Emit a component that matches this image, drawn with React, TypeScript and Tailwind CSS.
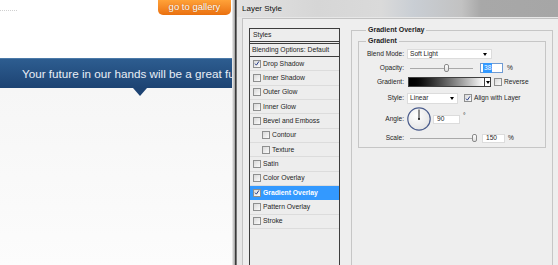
const listItems: { label: string; on?: boolean; sub?: boolean; selected?: boolean }[] = [
  { label: "Drop Shadow", on: true },
  { label: "Inner Shadow" },
  { label: "Outer Glow" },
  { label: "Inner Glow" },
  { label: "Bevel and Emboss" },
  { label: "Contour", sub: true },
  { label: "Texture", sub: true },
  { label: "Satin" },
  { label: "Color Overlay" },
  { label: "Gradient Overlay", on: true, selected: true },
  { label: "Pattern Overlay" },
  { label: "Stroke" },
];

function Check({ on, className = "" }: { on?: boolean; className?: string }) {
  return (
    <span
      className={`inline-flex h-[8px] w-[8px] shrink-0 items-center justify-center border border-[#8e8f8f] bg-gradient-to-br from-[#d9d9d9] to-[#fbfbfb] ${className}`}
    >
      {on && (
        <svg viewBox="0 0 8 8" className="h-[7px] w-[7px]">
          <path d="M1.4 4.2 L3.2 6.2 L6.6 1.2" stroke="#243a86" strokeWidth="1.3" fill="none" />
        </svg>
      )}
    </span>
  );
}

function Arrow() {
  return <span className="h-0 w-0 border-x-[2.5px] border-t-[3px] border-x-transparent border-t-black" />;
}

function Slider({ width, at }: { width: number; at: number }) {
  return (
    <div className="relative h-[10px]" style={{ width }}>
      <div className="absolute left-0 right-0 top-[5px] h-px bg-[#a9a9a9]" />
      <div
        className="absolute top-[1px] h-[8px] w-[5px] rounded-[2px] border border-[#8a8a8a] bg-gradient-to-b from-white to-[#dedede]"
        style={{ left: at - 2.5 }}
      />
    </div>
  );
}

function WebPage() {
  return (
    <div className="relative flex w-[232px] shrink-0 flex-col overflow-hidden bg-white">
      <div className="relative h-[58px] shrink-0">
        <div className="absolute left-0 top-[10px] w-[17px] border-t border-dotted border-[#d0d0d0]" />
        <div className="absolute right-[1px] top-0 flex h-[15px] w-[73px] items-center justify-center rounded-b-[5px] bg-gradient-to-b from-[#ffa238] to-[#ea700c] text-[9.5px] text-white [text-shadow:0_0_1px_#b35500]">
          go to gallery
        </div>
      </div>
      <div className="relative flex h-[30px] shrink-0 items-center whitespace-nowrap border-t border-[#4a79a8] bg-gradient-to-b from-[#2d5d90] to-[#1d4373] pl-[22px] text-[11.7px] text-[#e8eef6]">
        Your future in our hands will be a great future
        <span className="absolute left-[133px] top-[29px] h-0 w-0 border-x-[7.5px] border-t-[8px] border-x-transparent border-t-[#1d4373]" />
      </div>
      <div className="flex-1 bg-gradient-to-b from-[#f6f6f6] to-[#fcfcfc]" />
    </div>
  );
}

function StylesList() {
  return (
    <div className="mt-[9px] flex h-[245px] w-[91px] shrink-0 flex-col border border-[#3d3d3d] bg-[#ededed] text-[6.8px] text-[#1e1e1e]">
      <div className="flex h-[13px] shrink-0 items-center border-b border-[#3d3d3d] pl-[3px]">Styles</div>
      <div className="mt-px flex h-[14px] shrink-0 items-center border-y border-[#3d3d3d] pl-[2px]">Blending Options: Default</div>
      {listItems.map((it) => (
        <div
          key={it.label}
          className={`flex h-[14.35px] shrink-0 items-center border-b ${
            it.selected ? "border-[#3399ff] bg-[#3399ff] font-bold text-white" : "border-[#dcdcdc]"
          } ${it.sub ? "pl-[12px]" : "pl-[3px]"}`}
        >
          <Check on={it.on} />
          <span className="ml-[2px]">{it.label}</span>
        </div>
      ))}
    </div>
  );
}

function Row({ label, h, children }: { label: string; h: string; children: React.ReactNode }) {
  return (
    <div className={`flex items-center ${h}`}>
      <span className="w-[45px] shrink-0 text-right">{label}</span>
      {children}
    </div>
  );
}

function GradientPanel() {
  return (
    <fieldset className="ml-[11px] mt-[7px] h-[245px] w-[202px] shrink-0 border border-[#c6c6c6] px-[6px]">
      <legend className="ml-[8px] px-[2px] text-[7px] font-bold leading-[8px] text-[#1e1e1e]">Gradient Overlay</legend>
      <fieldset className="mt-[3px] border border-[#c6c6c6] pb-[4px] text-[6.6px] text-[#1e1e1e]">
        <legend className="ml-[7px] px-[2px] text-[7px] font-bold leading-[8px]">Gradient</legend>
        <div className="mt-[3px] flex flex-col">
          <Row label="Blend Mode:" h="h-[12px]">
            <div className="ml-[3px] flex h-[10px] w-[85px] items-center justify-between border border-[#dcdcdc] bg-white pl-[2px] pr-[4px]">
              <span>Soft Light</span>
              <Arrow />
            </div>
          </Row>
          <Row label="Opacity:" h="mt-[2px] h-[12px]">
            <div className="ml-[6px]">
              <Slider width={63} at={36} />
            </div>
            <div className="ml-[7px] flex h-[10px] w-[23px] items-center border border-[#6f9bd3] bg-white pl-[2px]">
              <span className="bg-[#3399ff] px-px text-white">38</span>
            </div>
            <span className="ml-[4px]">%</span>
          </Row>
          <Row label="Gradient:" h="mt-[2px] h-[12px]">
            <div className="ml-[4px] flex h-[10px] items-stretch border border-[#3f3f3f]">
              <div className="w-[75px] bg-gradient-to-r from-black to-white" />
              <div className="flex w-[6px] items-center justify-center border-l border-[#3f3f3f] bg-white">
                <Arrow />
              </div>
            </div>
            <Check className="ml-[3px]" />
            <span className="ml-[2px]">Reverse</span>
          </Row>
          <Row label="Style:" h="mt-[4px] h-[12px]">
            <div className="ml-[3px] flex h-[11px] w-[51px] items-center justify-between border border-[#dcdcdc] bg-white pl-[2px] pr-[3px]">
              <span>Linear</span>
              <Arrow />
            </div>
            <Check on className="ml-[6px]" />
            <span className="ml-[2px]">Align with Layer</span>
          </Row>
          <Row label="Angle:" h="mt-[2px] h-[26px]">
            <svg viewBox="0 0 24 24" className="ml-[3px] h-[24px] w-[24px]">
              <defs>
                <radialGradient id="dial" cx="40%" cy="35%" r="70%">
                  <stop offset="0%" stopColor="#ffffff" />
                  <stop offset="100%" stopColor="#e2e2e2" />
                </radialGradient>
              </defs>
              <circle cx="12" cy="12" r="11.2" fill="url(#dial)" stroke="#4a5c8c" strokeWidth="1.2" />
              <line x1="12" y1="12" x2="12" y2="2.5" stroke="#111" strokeWidth="0.9" />
              <circle cx="12" cy="12" r="1" fill="#111" />
            </svg>
            <div className="ml-[2px] flex h-[9px] w-[27px] items-center border border-[#dcdcdc] bg-white pl-[3px]">90</div>
            <span className="mb-[6px] ml-[3px]">°</span>
          </Row>
          <Row label="Scale:" h="mt-px h-[10px]">
            <div className="ml-[6px]">
              <Slider width={65} at={64} />
            </div>
            <div className="ml-[7px] flex h-[9px] w-[23px] items-center border border-[#dcdcdc] bg-white pl-[3px]">150</div>
            <span className="ml-[3px]">%</span>
          </Row>
        </div>
      </fieldset>
    </fieldset>
  );
}

function Dialog() {
  return (
    <div className="flex min-w-0 flex-1 flex-col bg-[#e7e7e7]">
      <div className="flex h-[17px] shrink-0 items-center bg-[linear-gradient(90deg,#e2e2e2_0%,#d6d6d6_25%,#dadada_45%,#c9ced4_55%,#c2c2c2_70%,#a8a8a8_76%,#a6a6a6_100%)] pl-[5px] text-[8px] text-[#111]">
        Layer Style
      </div>
      <div className="min-h-0 flex-1 pl-[5px] pt-px">
        <div className="flex h-full items-start overflow-hidden border-l border-t border-[#c2c2c2] bg-[#eeeeee] pl-[6px]">
          <StylesList />
          <GradientPanel />
        </div>
      </div>
    </div>
  );
}

export default function App() {
  return (
    <div className="flex h-[265px] w-[558px] overflow-hidden bg-white font-['Liberation_Sans',Arial,sans-serif]">
      <WebPage />
      <div className="w-[3px] shrink-0 bg-gradient-to-r from-[#f2f2f2] to-[#a0a0a0]" />
      <div className="w-px shrink-0 bg-[#3a3a3a]" />
      <div className="w-px shrink-0 bg-[#777]" />
      <Dialog />
    </div>
  );
}
